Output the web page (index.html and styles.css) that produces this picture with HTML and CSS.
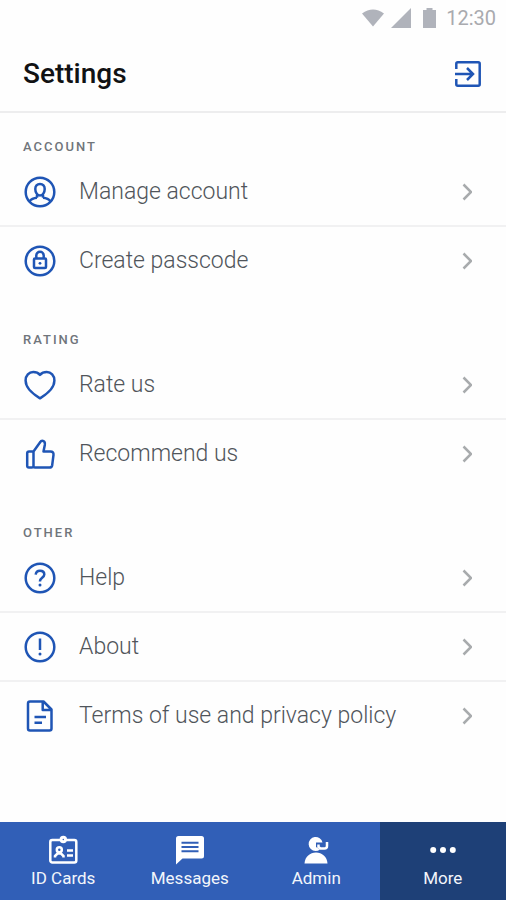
FILE: index.html
```html
<!DOCTYPE html>
<html lang="en">
<head>
<meta charset="utf-8">
<meta name="viewport" content="width=device-width, initial-scale=1">
<title>Settings</title>
<link rel="stylesheet" href="styles.css">
</head>
<body>
<div class="status">
  <svg width="22" height="18" viewBox="0 0 22 18" aria-hidden="true"><path d="M0 4.500Q11-3.500 22 4.500L11 17.500z"/></svg>
  <svg class="signal" width="20" height="20" viewBox="0 0 20 20" aria-hidden="true"><path d="M20 0v20H0z"/></svg>
  <svg class="battery" width="13" height="20" viewBox="0 0 13 20" aria-hidden="true"><path d="M3.500 0h6v2H13v18H0V2h3.500z"/></svg>
  <span>12:30</span>
</div>
<header class="header">
  <h1>Settings</h1>
  <button class="exit" type="button" aria-label="Log out">
    <svg width="26" height="26" viewBox="0 0 26 26"><path d="M1.300 8V2.800q0-1.500 1.500-1.500h20.400q1.500 0 1.500 1.500v20.400q0 1.500-1.500 1.500H2.800q-1.500 0-1.500-1.500V18M0 13h18M12 7l6 6-6 6"/></svg>
  </button>
</header>
<main class="main">
  <section class="group">
    <h2>ACCOUNT</h2>
    <ul>
      <li><a class="row" href="#account">
        <svg class="icon" viewBox="0 0 32 32"><circle cx="16" cy="16" r="14.300"/><path d="M16 8c-3 0-4.700 2.200-4.700 5s1.700 6.500 4.700 6.500 4.700-3.700 4.700-6.500S19 8 16 8zM5.500 25.500c1.500-2.200 4-3.500 7.500-3.700M26.500 25.500c-1.500-2.200-4-3.500-7.500-3.700M13 21.800v-3M19 21.800v-3"/></svg>
        <span>Manage account</span><svg class="chevron" viewBox="0 0 10 18"><path d="M1.500 1.500L9 9l-7.500 7.500"/></svg></a></li>
      <li><a class="row" href="#passcode">
        <svg class="icon" viewBox="0 0 32 32"><circle cx="16" cy="16" r="14.300"/><rect x="10" y="13.500" width="12" height="9.500" rx="1"/><path d="M12.300 13.500V10.500a3.700 3.700 0 0 1 7.400 0v3"/><circle class="dot" cx="16" cy="18.300" r="1.400"/></svg>
        <span>Create passcode</span><svg class="chevron" viewBox="0 0 10 18"><path d="M1.500 1.500L9 9l-7.500 7.500"/></svg></a></li>
    </ul>
  </section>
  <section class="group">
    <h2>RATING</h2>
    <ul>
      <li><a class="row" href="#rate">
        <svg class="icon" viewBox="0 0 32 32"><path d="M16 29.300C12 27 1.600 20 1.600 11.500 1.600 6.500 5 3 9.200 3c2.800 0 5.200 1 6.800 2.800C17.600 4 20 3 22.800 3c4.200 0 7.600 3.500 7.600 8.500C30.400 20 20 27 16 29.300z"/></svg>
        <span>Rate us</span><svg class="chevron" viewBox="0 0 10 18"><path d="M1.500 1.500L9 9l-7.500 7.500"/></svg></a></li>
      <li><a class="row" href="#recommend">
        <svg class="icon" viewBox="0 0 32 32"><path d="M9.500 13.500V28q0 1.500 1.500 1.500h14.500q2.300 0 2.700-2.300l1.300-10.400q.3-3.300-3-3.300h-7l1.300-6.500C21.300 4 20 2.700 18.300 2.700c-1 0-1.600.500-2 1.400zM9.500 13.500H5q-1.800 0-1.800 1.800v12.400q0 1.800 1.800 1.800h2.700q1.800 0 1.800-1.800"/></svg>
        <span>Recommend us</span><svg class="chevron" viewBox="0 0 10 18"><path d="M1.500 1.500L9 9l-7.500 7.500"/></svg></a></li>
    </ul>
  </section>
  <section class="group">
    <h2>OTHER</h2>
    <ul>
      <li><a class="row" href="#help">
        <svg class="icon" viewBox="0 0 32 32"><circle cx="16" cy="16" r="14.300"/><path d="M11.700 12.700c.2-2.500 1.900-4 4.300-4 2.500 0 4.300 1.500 4.300 3.800 0 3-4.300 3.500-4.300 6.500v.5"/><circle class="dot" cx="16" cy="23" r="1.500"/></svg>
        <span>Help</span><svg class="chevron" viewBox="0 0 10 18"><path d="M1.500 1.500L9 9l-7.500 7.500"/></svg></a></li>
      <li><a class="row" href="#about">
        <svg class="icon" viewBox="0 0 32 32"><circle cx="16" cy="16" r="14.300"/><path d="M16 7.500v11.500"/><circle class="dot" cx="16" cy="23" r="1.500"/></svg>
        <span>About</span><svg class="chevron" viewBox="0 0 10 18"><path d="M1.500 1.500L9 9l-7.500 7.500"/></svg></a></li>
      <li><a class="row" href="#terms">
        <svg class="icon" viewBox="0 0 32 32"><path d="M6 1.500h13.500l8 8V28.500q0 2-2 2H6q-2 0-2-2v-25q0-2 2-2zM18.700 1.500v8.500h8.800M10.500 17h11.500M10.500 22.700h7.500"/></svg>
        <span>Terms of use and privacy policy</span><svg class="chevron" viewBox="0 0 10 18"><path d="M1.500 1.500L9 9l-7.500 7.500"/></svg></a></li>
    </ul>
  </section>
</main>
<nav class="tabs">
  <a href="#cards"><svg viewBox="0 0 32 30"><g class="line"><rect x="3.300" y="5" width="26" height="22.500" rx="2"/><path d="M8 22.500v-1.500l2.500-2.500h3.500l2.500 2.500v1.500M20 15.500h6M20 20.500h6"/><circle cx="12.300" cy="14.700" r="2.500"/></g><circle cx="16.300" cy="4.500" r="3.700"/><circle class="hole" cx="16.300" cy="4.500" r=".7"/></svg><span>ID Cards</span></a>
  <a href="#messages"><svg viewBox="0 0 32 30"><path d="M4.500 1h23Q30 1 30 3.500V21q0 2.500-2.500 2.500H8.500L2 29.500v-26Q2 1 4.500 1z"/><path class="cut" d="M7.500 7.700h17M7.500 12h17M7.500 16.300h17"/></svg><span>Messages</span></a>
  <a href="#admin"><svg viewBox="0 0 32 30"><path d="M22.500 7.500A7 7 0 1 0 15.500 16q2.500 0 4.500-1.500L16 12V7.500z"/><path d="M4.500 28.500C5 21.500 10 17.500 16 17.500s11 4 11.500 11z"/><path class="arm" d="M18.500 9.500v2.500l2 1.500h4q2.500 0 2.500-2.500V7"/></svg><span>Admin</span></a>
  <a class="active" href="#more" aria-current="page"><svg viewBox="0 0 32 30"><circle cx="6.200" cy="15" r="3"/><circle cx="16" cy="15" r="3"/><circle cx="25.800" cy="15" r="3"/></svg><span>More</span></a>
</nav>
</body>
</html>
```
FILE: styles.css
```css
* { box-sizing: border-box; }
body {
  margin: 0;
  min-height: 100vh;
  display: flex;
  flex-direction: column;
  background: #fefefe;
  color: #50555b;
  font-family: Roboto, "Liberation Sans", sans-serif;
}
a { color: inherit; text-decoration: none; }
ul { list-style: none; margin: 0; padding: 0; }
.status {
  display: flex;
  justify-content: flex-end;
  align-items: center;
  height: 36px;
  padding: 0 10px;
  color: #a9aaaf;
  font-size: 20px;
}
.status svg { fill: #b0b3bb; }
.signal { margin: 0 12px 0 7px; }
.battery { margin-right: 10px; }
.header {
  display: flex;
  justify-content: space-between;
  align-items: center;
  height: 77px;
  padding: 0 25px 0 23px;
  border-bottom: 2px solid #ededee;
}
h1 {
  margin: 0;
  color: #111214;
  font-size: 28px;
  line-height: 32px;
  font-weight: 500;
}
.exit {
  display: flex;
  padding: 0;
  border: 0;
  background: none;
}
.exit svg, .icon {
  fill: none;
  stroke: #1f55b5;
  stroke-width: 2.5;
}
.main { flex: 1; }
.group { padding-bottom: 12px; }
h2 {
  margin: 0;
  padding: 25px 23px 2px;
  color: #70757b;
  font-size: 13px;
  line-height: 18px;
  font-weight: 500;
  letter-spacing: 2px;
}
.row {
  display: flex;
  align-items: center;
  height: 67px;
  padding: 0 34px 0 24px;
  font-size: 23px;
  font-weight: 300;
}
li + li { border-top: 2px solid #f1f1f2; }
.row span { flex: 1; margin-left: 23px; }
.icon { width: 32px; height: 32px; stroke-linejoin: round; }
.icon .dot { fill: #1f55b5; stroke: none; }
.chevron {
  width: 10px;
  height: 18px;
  fill: none;
  stroke: #a8abad;
  stroke-width: 2.5;
}
.tabs {
  display: grid;
  grid-template-columns: repeat(4, 1fr);
  background: #315fb7;
  color: #f3f6fb;
  font-size: 17px;
  line-height: 22px;
}
.tabs a {
  display: flex;
  flex-direction: column;
  align-items: center;
  gap: 2px;
  height: 78px;
  padding-top: 13px;
}
.tabs .active { background: #1e4077; }
.tabs svg { width: 32px; height: 30px; fill: #fff; }
.tabs .line { fill: none; stroke: #fff; stroke-width: 2.5; }
.tabs .hole { fill: #315fb7; }
.tabs .cut { fill: none; stroke: #315fb7; stroke-width: 2; }
.tabs .arm { fill: none; stroke: #fff; stroke-width: 2.5; }
```
